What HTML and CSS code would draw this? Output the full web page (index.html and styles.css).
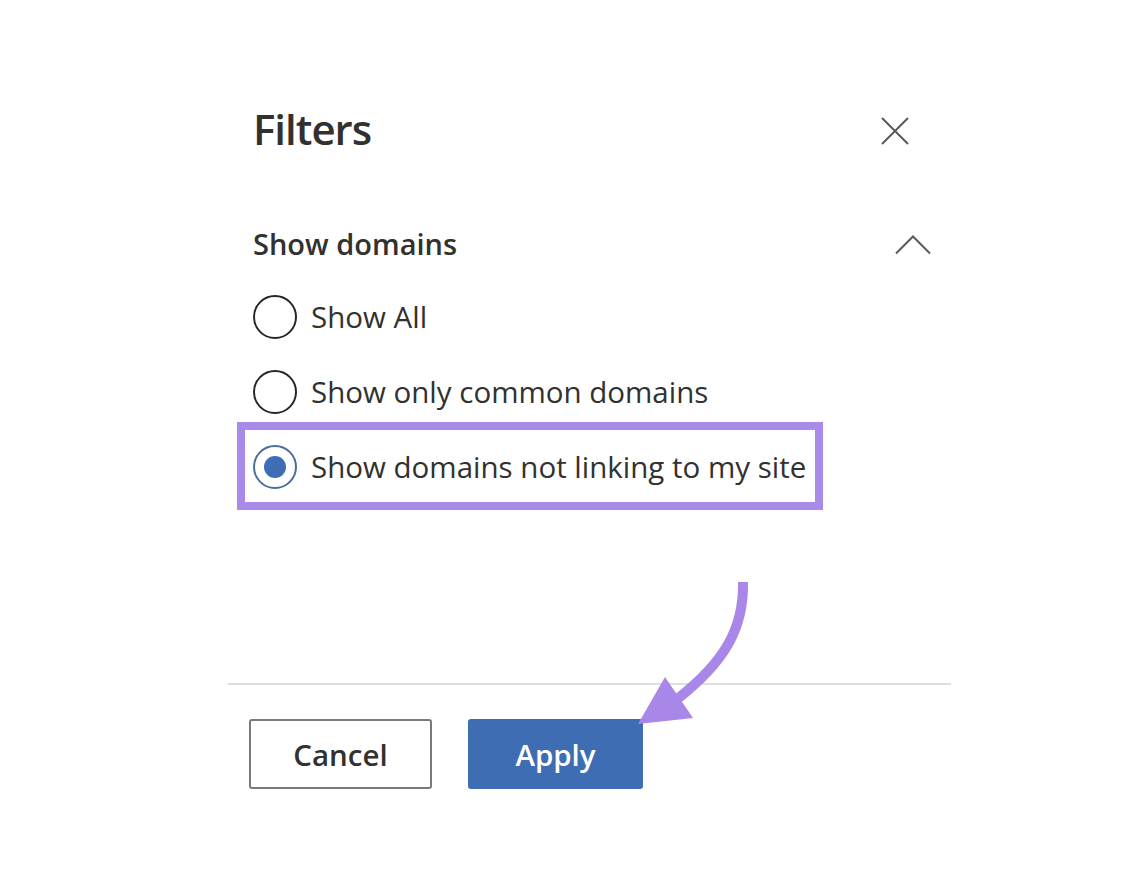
FILE: index.html
```html
<!DOCTYPE html>
<html lang="en">
<head>
<meta charset="utf-8">
<title>Filters</title>
<link rel="stylesheet" href="styles.css">
</head>
<body>
<div class="page">
  <section class="panel">
    <header class="panel-header">
      <h1 class="title">Filters</h1>
      <button class="close" aria-label="Close">
        <svg width="28" height="28" viewBox="0 0 28 28"><path d="M1 1 L27 27 M27 1 L1 27" stroke="#595959" stroke-width="2" fill="none"/></svg>
      </button>
    </header>

    <div class="section-header">
      <h2 class="section-title">Show domains</h2>
      <svg class="chevron" width="36" height="20" viewBox="0 0 36 20"><path d="M1 18.5 L18 1.5 L35 18.5" stroke="#595959" stroke-width="2" fill="none"/></svg>
    </div>

    <div class="options">
      <label class="option">
        <span class="radio"></span>
        <span class="option-label">Show All</span>
      </label>
      <label class="option">
        <span class="radio"></span>
        <span class="option-label">Show only common domains</span>
      </label>
      <label class="option option-highlight">
        <span class="radio radio-checked"><span class="dot"></span></span>
        <span class="option-label">Show domains not linking to my site</span>
      </label>
    </div>

    <footer class="panel-footer">
      <button class="btn btn-cancel">Cancel</button>
      <button class="btn btn-apply">Apply</button>
    </footer>
  </section>

  <svg class="arrow" width="1143" height="881" viewBox="0 0 1143 881">
    <path d="M743 582 C744 628 725 662 676 700" stroke="#a987e8" stroke-width="10" fill="none" stroke-linecap="butt"/>
    <polygon points="638,724 665,677 693,718" fill="#a987e8"/>
  </svg>
</div>
</body>
</html>
```

FILE: styles.css
```css
*, *::before, *::after { box-sizing: border-box; }

html, body {
  margin: 0;
  padding: 0;
  background: #ffffff;
}

body {
  font-family: "Open Sans", "Noto Sans", "Liberation Sans", sans-serif;
  color: #323130;
}

.page {
  position: relative;
  width: 1143px;
  height: 881px;
  overflow: hidden;
}

.panel {
  width: 723px;
  margin-left: 228px;
  padding-top: 101px;
}

.panel-header {
  display: flex;
  align-items: center;
  justify-content: space-between;
  height: 56px;
  padding-left: 25px;
}

.title {
  margin: 0;
  font-size: 42px;
  font-weight: 600;
  line-height: 56px;
  letter-spacing: -1px;
  color: #323130;
}

.close {
  border: 0;
  background: none;
  padding: 0;
  margin-right: 42px;
  margin-top: 4px;
  width: 28px;
  height: 28px;
  display: flex;
}

.section-header {
  display: flex;
  align-items: center;
  justify-content: space-between;
  height: 40px;
  margin-top: 67px;
  padding-left: 25px;
  padding-right: 20px;
}

.section-title {
  margin: 0;
  font-size: 29px;
  font-weight: 600;
  line-height: 40px;
  color: #323130;
}

.chevron {
  margin-top: 2px;
}

.options {
  display: flex;
  flex-direction: column;
  gap: 31px;
  margin-top: 31px;
  padding-left: 25px;
}

.option {
  position: relative;
  display: flex;
  align-items: center;
  height: 44px;
  gap: 14px;
}

.radio {
  width: 44px;
  height: 44px;
  flex: 0 0 44px;
  border: 2px solid #262626;
  border-radius: 50%;
  display: flex;
  align-items: center;
  justify-content: center;
}

.radio-checked {
  border: 2px solid #4a6c9a;
}

.dot {
  width: 22px;
  height: 22px;
  border-radius: 50%;
  background: #3f6db5;
}

.option-label {
  font-size: 29.5px;
  line-height: 44px;
  color: #323130;
}

.option-highlight::after {
  content: "";
  position: absolute;
  left: -16px;
  top: -23px;
  width: 586px;
  height: 88px;
  border: 8px solid #a98ae9;
  pointer-events: none;
}

.panel-footer {
  margin-top: 194px;
  border-top: 2px solid #dedede;
  padding-top: 34px;
  padding-left: 21px;
  display: flex;
  gap: 36px;
}

.btn {
  height: 70px;
  font-family: "Open Sans", "Noto Sans", "Liberation Sans", sans-serif;
  font-size: 29.5px;
  font-weight: 600;
  border-radius: 3px;
  padding: 0;
}

.btn-cancel {
  width: 183px;
  background: #ffffff;
  border: 2px solid #7a7a7a;
  color: #323130;
}

.btn-apply {
  width: 175px;
  background: #3f6db3;
  border: 0;
  color: #ffffff;
}

.arrow {
  position: absolute;
  left: 0;
  top: 0;
  pointer-events: none;
}
```
